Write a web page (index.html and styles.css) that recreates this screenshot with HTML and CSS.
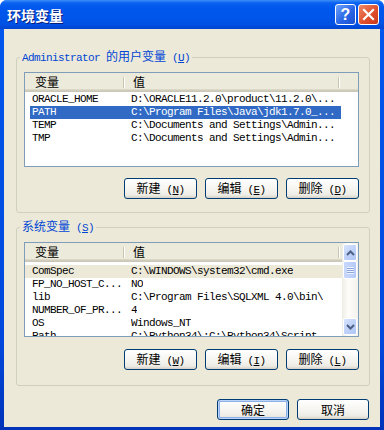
FILE: index.html
```html
<!DOCTYPE html>
<html lang="zh-CN">

<head>
    <meta charset="UTF-8">
    <title>环境变量</title>
    <link rel="stylesheet" href="styles.css">
</head>

<body>
    <div class="window">
        <div class="titlebar">
            <span class="title">环境变量</span>
            <div class="cap-btns">
                <span class="cap-btn help">?</span>
                <span class="cap-btn close">
                    <svg width="19" height="19" viewBox="0 0 19 19">
                        <path d="M5 5 L14 14 M14 5 L5 14" stroke="#fff" stroke-width="2.2" stroke-linecap="square" />
                    </svg>
                </span>
            </div>
        </div>

        <div class="client">
            <fieldset class="group">
                <legend><span class="lat">Administrator </span>的用户变量<span class="lat"> (<u>U</u>)</span></legend>
                <div class="listview">
                    <div class="lv-header">
                        <span class="hcol name">变量</span>
                        <span class="hcol value">值</span>
                    </div>
                    <div class="lv-rows">
                        <div class="lv-row"><span class="c1">ORACLE_HOME</span><span class="c2">D:\ORACLE11.2.0\product\11.2.0\...</span></div>
                        <div class="lv-row selected"><span class="c1">PATH</span><span class="c2">C:\Program Files\Java\jdk1.7.0_...</span></div>
                        <div class="lv-row"><span class="c1">TEMP</span><span class="c2">C:\Documents and Settings\Admin...</span></div>
                        <div class="lv-row"><span class="c1">TMP</span><span class="c2">C:\Documents and Settings\Admin...</span></div>
                    </div>
                </div>
                <div class="btn-row">
                    <button class="xp">新建<span class="lat"> (<u>N</u>)</span></button>
                    <button class="xp">编辑<span class="lat"> (<u>E</u>)</span></button>
                    <button class="xp">删除<span class="lat"> (<u>D</u>)</span></button>
                </div>
            </fieldset>

            <fieldset class="group second">
                <legend>系统变量<span class="lat"> (<u>S</u>)</span></legend>
                <div class="listview scroll">
                    <div class="lv-main">
                        <div class="lv-header">
                            <span class="hcol name">变量</span>
                            <span class="hcol value">值</span>
                        </div>
                        <div class="lv-rows sys">
                            <div class="lv-row full inactive"><span class="c1">ComSpec</span><span class="c2">C:\WINDOWS\system32\cmd.exe</span></div>
                            <div class="lv-row full"><span class="c1">FP_NO_HOST_C...</span><span class="c2">NO</span></div>
                            <div class="lv-row full"><span class="c1">lib</span><span class="c2">C:\Program Files\SQLXML 4.0\bin\</span></div>
                            <div class="lv-row full"><span class="c1">NUMBER_OF_PR...</span><span class="c2">4</span></div>
                            <div class="lv-row full"><span class="c1">OS</span><span class="c2">Windows_NT</span></div>
                            <div class="lv-row full"><span class="c1">Path</span><span class="c2">C:\Python34\;C:\Python34\Script...</span></div>
                        </div>
                    </div>
                    <div class="scrollbar">
                        <span class="sb-btn">
                            <svg width="9" height="6" viewBox="0 0 9 6"><path d="M1 5 L4.5 1.5 L8 5" fill="none" stroke="#4D6185" stroke-width="2" /></svg>
                        </span>
                        <span class="sb-thumb"><span class="grip"></span></span>
                        <span class="sb-track"></span>
                        <span class="sb-btn">
                            <svg width="9" height="6" viewBox="0 0 9 6"><path d="M1 1 L4.5 4.5 L8 1" fill="none" stroke="#4D6185" stroke-width="2" /></svg>
                        </span>
                    </div>
                </div>
                <div class="btn-row">
                    <button class="xp">新建<span class="lat"> (<u>W</u>)</span></button>
                    <button class="xp">编辑<span class="lat"> (<u>I</u>)</span></button>
                    <button class="xp">删除<span class="lat"> (<u>L</u>)</span></button>
                </div>
            </fieldset>

            <div class="dialog-btns">
                <button class="xp wide default">确定</button>
                <button class="xp wide">取消</button>
            </div>
        </div>
    </div>
</body>

</html>
```

FILE: styles.css
```css
* {
    box-sizing: border-box;
}

body {
    margin: 0;
    background: #fff;
    font-family: "Noto Sans CJK SC", sans-serif;
    font-size: 12px;
}

.lat {
    font-family: "Liberation Mono", monospace;
    font-size: 11px;
    letter-spacing: -0.6px;
}

.window {
    width: 384px;
    height: 430px;
    display: flex;
    flex-direction: column;
    background: linear-gradient(to bottom, #0058ee, #0048dc 80%, #0033b8);
    border-radius: 7px 7px 0 0;
    overflow: hidden;
}

.titlebar {
    height: 29px;
    display: flex;
    align-items: center;
    padding: 0 5px 0 7px;
    background: linear-gradient(to bottom, #3d8ff9 0%, #0b62f1 10%, #0058ee 25%, #0055ea 60%, #0050e3 85%, #0044d0 100%);
}

.title {
    color: #fff;
    font-weight: bold;
    font-size: 14px;
    text-shadow: 1px 1px #0a1d7a;
    padding-top: 1px;
}

.cap-btns {
    margin-left: auto;
    display: flex;
    gap: 2px;
}

.cap-btn {
    width: 21px;
    height: 21px;
    border: 1px solid #fff;
    border-radius: 3px;
    display: flex;
    align-items: center;
    justify-content: center;
    color: #fff;
}

.cap-btn.help {
    background: linear-gradient(135deg, #6fa3fb, #2a66e6 55%, #1a4fd0);
    font-family: "Liberation Sans", sans-serif;
    font-weight: bold;
    font-size: 16px;
}

.cap-btn.close {
    background: linear-gradient(135deg, #f08a66, #e0502d 55%, #c8381c);
}

.client {
    flex: 1;
    margin: 0 4px 3px 4px;
    background: #ece9d8;
    padding-top: 20px;
}

.group {
    margin: 0 10px 0 12px;
    width: 354px;
    min-width: 0;
    border: 1px solid #d0d0bf;
    border-radius: 3px;
    padding: 7px 9px 13px 3px;
}

.group.second {
    margin-top: 6px;
    padding-bottom: 15px;
}

.group legend {
    padding: 0 2px;
    color: #0046d5;
    line-height: 14px;
    font-size: 12px;
}

.listview {
    width: 335px;
    height: 95px;
    margin-left: 4px;
    border: 1px solid #7f9db9;
    background: #fff;
    overflow: hidden;
}

.listview.scroll {
    display: flex;
}

.lv-main {
    flex: 1;
    min-width: 0;
    overflow: hidden;
}

.lv-header {
    display: flex;
    height: 19px;
    background: linear-gradient(to bottom, #ebeadb 0, #ebeadb 16px, #e2decd 16px, #d6d2c2 17px, #cbc7b8 18px);
}

.hcol {
    position: relative;
    flex: none;
    line-height: 18px;
    color: #000;
}

.hcol::after {
    content: "";
    position: absolute;
    right: 1px;
    top: 4px;
    bottom: 4px;
    width: 1px;
    background: #c7c5b2;
    box-shadow: 1px 0 #fff;
}

.hcol.name {
    width: 100px;
    padding-left: 10px;
}

.hcol.value {
    width: 215px;
    padding-left: 8px;
}

.lv-rows {
    padding-top: 1px;
    font-family: "Liberation Mono", monospace;
    font-size: 11px;
    letter-spacing: -0.6px;
}

.lv-rows.sys {
    padding-top: 3px;
}

.lv-row {
    display: flex;
    height: 13px;
    line-height: 13px;
    margin-left: 5px;
    width: 311px;
    white-space: pre;
}

.lv-row.full {
    margin-left: 0;
    width: auto;
    padding-left: 5px;
}

.lv-row .c1 {
    width: 101px;
    flex: none;
    padding-left: 2px;
    overflow: hidden;
}

.lv-row .c2 {
    overflow: hidden;
}

.lv-row.selected {
    background: #316ac5;
    color: #fff;
}

.lv-row.inactive {
    background: #ece9d8;
}

.scrollbar {
    width: 16px;
    flex: none;
    display: flex;
    flex-direction: column;
    background: linear-gradient(to right, #eeede5, #fdfdfa 40%, #f3f1ec);
}

.sb-btn {
    height: 17px;
    margin: 1px 1px 0 1px;
    border: 1px solid #fff;
    border-radius: 2px;
    background: linear-gradient(135deg, #d7e3fd, #bccff8 60%, #b0c6f4);
    display: flex;
    align-items: center;
    justify-content: center;
}

.sb-btn:last-child {
    margin: 0 1px 1px 1px;
}

.sb-thumb {
    height: 18px;
    margin: 0 1px;
    border: 1px solid #fff;
    border-radius: 2px;
    background: linear-gradient(to right, #c9d8fc, #bdd0fa 60%, #b4c9f6);
    display: flex;
    align-items: center;
    justify-content: center;
}

.grip {
    width: 7px;
    height: 7px;
    background: repeating-linear-gradient(to bottom, #eef3ff 0, #eef3ff 1px, #8ca6dd 1px, #8ca6dd 2px);
}

.sb-track {
    flex: 1;
}

.btn-row {
    display: flex;
    justify-content: flex-end;
    gap: 8px;
    width: 335px;
    margin: 11px 0 0 4px;
}

.group.second .btn-row {
    margin-top: 12px;
}

button.xp {
    width: 73px;
    height: 21px;
    padding: 0;
    font-family: "Noto Sans CJK SC", sans-serif;
    font-size: 12px;
    color: #000;
    border: 1px solid #003c74;
    border-radius: 3px;
    background: linear-gradient(to bottom, #ffffff, #f4f3ee 60%, #ecebe4 85%, #d6d0c5);
    line-height: 17px;
}

button.xp.wide {
    width: 72px;
}

button.xp.default {
    box-shadow: inset 0 0 0 1px #bad3f7, inset 0 0 0 2px #8db2e8;
}

.dialog-btns {
    display: flex;
    justify-content: flex-end;
    gap: 8px;
    margin: 13px 11px 0 0;
}
```
